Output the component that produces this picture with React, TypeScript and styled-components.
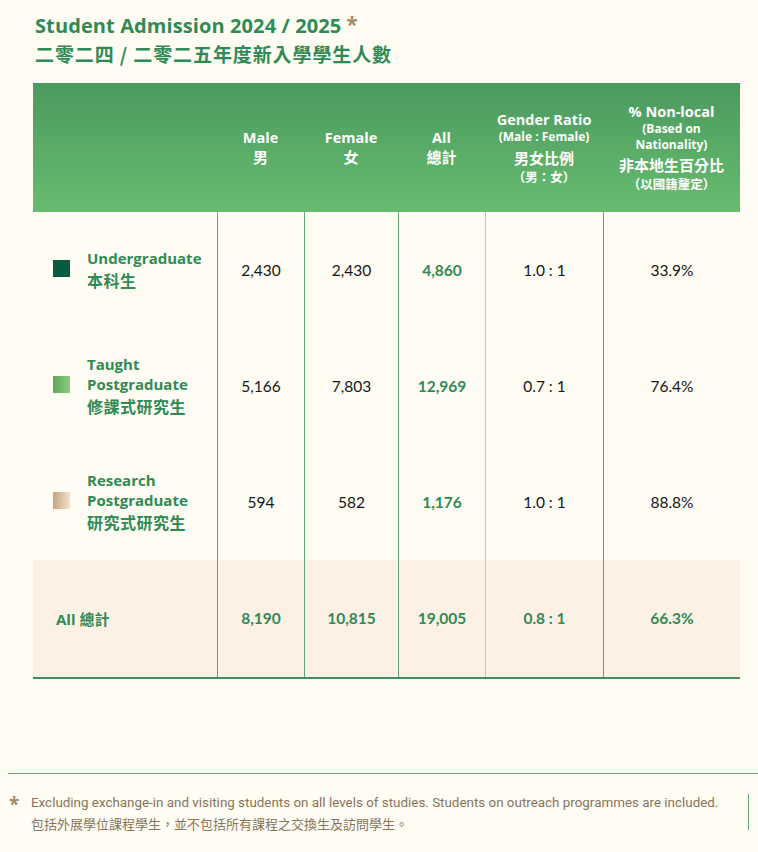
import React from "react";
import styled, { createGlobalStyle } from "styled-components";

const Global = createGlobalStyle`
  html, body { margin: 0; padding: 0; background: #fffcf3; }
  body { font-family: "Open Sans", "Noto Sans CJK TC", sans-serif; }
`;

const GREEN = "#2f8a55";
const LINE = "#5fa673";
const LINE_LIGHT = "#acd2b4";

const Page = styled.div`
  width: 758px;
  height: 852px;
  display: flex;
  flex-direction: column;
  box-sizing: border-box;
  padding-top: 10px;
`;

const TitleBlock = styled.div`
  padding-left: 35px;
  color: ${GREEN};
  font-weight: 700;
`;

const TitleEn = styled.div`
  font-family: "Open Sans", "Noto Sans CJK TC", sans-serif;
  font-size: 20px;
  line-height: 28px;
  letter-spacing: 0.1px;
`;

const Star = styled.span`
  color: #a58c68;
  font-size: 21px;
  margin-left: 5px;
  vertical-align: 1px;
`;

const TitleZh = styled.div`
  font-family: "Noto Sans CJK TC", sans-serif;
  font-size: 19px;
  line-height: 28px;
  letter-spacing: 0.9px;
`;

const Table = styled.div`
  margin: 15px 0 0 33px;
  width: 707px;
  display: grid;
  grid-template-columns: 184px 87px 94px 87px 118px 137px;
  border-bottom: 2px solid #3f8f5d;
`;

const Head = styled.div`
  grid-column: 1 / -1;
  display: grid;
  grid-template-columns: subgrid;
  height: 129px;
  background: linear-gradient(180deg, #4a9a5e 0%, #68bc6f 100%);
`;

const HeadCell = styled.div`
  display: flex;
  flex-direction: column;
  align-items: center;
  justify-content: center;
  text-align: center;
  color: #ffffff;
  font-weight: 700;
  padding: 0 2px;
`;

const HBig = styled.div`
  font-family: "Open Sans", "Noto Sans CJK TC", sans-serif;
  font-size: 14.5px;
  line-height: 19px;
`;

const HZh = styled.div<{ $gap?: number }>`
  font-family: "Noto Sans CJK TC", sans-serif;
  font-size: 15px;
  line-height: 20px;
  margin-top: ${(p) => p.$gap ?? 0}px;
`;

const HSmall = styled.div`
  font-family: "Open Sans", "Noto Sans CJK TC", sans-serif;
  font-size: 12px;
  line-height: 16px;
`;

const HSmallZh = styled.div`
  font-family: "Noto Sans CJK TC", sans-serif;
  font-size: 12.5px;
  line-height: 18px;
`;

const Row = styled.div<{ $total?: boolean }>`
  grid-column: 1 / -1;
  display: grid;
  grid-template-columns: subgrid;
  height: ${(p) => (p.$total ? 117 : 116)}px;
  background: ${(p) => (p.$total ? "#fdf1e6" : "transparent")};
`;

const Cell = styled.div<{ $div?: "dark" | "light"; $green?: boolean; $total?: boolean }>`
  display: flex;
  align-items: center;
  justify-content: center;
  border-left: ${(p) =>
    p.$div ? `1px solid ${p.$div === "light" ? LINE_LIGHT : LINE}` : "none"};
  font-family: "Lato", sans-serif;
  font-size: 15.5px;
  font-weight: ${(p) => (p.$green || p.$total ? 700 : 400)};
  color: ${(p) => (p.$green || p.$total ? GREEN : "#161616")};
  padding-bottom: 1px;
`;

const LabelCell = styled.div`
  display: flex;
  align-items: center;
  padding-left: 20px;
  gap: 17px;
`;

const Swatch = styled.div<{ $bg: string }>`
  width: 17px;
  height: 17px;
  flex: none;
  background: ${(p) => p.$bg};
  margin-top: -3px;
`;

const Label = styled.div`
  color: ${GREEN};
  font-weight: 700;
  font-family: "Open Sans", "Noto Sans CJK TC", sans-serif;
  font-size: 15px;
  line-height: 20px;
`;

const LabelZh = styled.div`
  font-family: "Noto Sans CJK TC", sans-serif;
  font-size: 16px;
  line-height: 24px;
  letter-spacing: 0.5px;
`;

const TotalLabel = styled.div`
  display: flex;
  align-items: center;
  padding-left: 23px;
  color: ${GREEN};
  font-weight: 700;
  font-family: "Open Sans", "Noto Sans CJK TC", sans-serif;
  font-size: 15px;
`;

const Spacer = styled.div`
  flex: 1;
`;

const Footer = styled.div`
  border-top: 1px solid #5fb27a;
  margin-left: 8px;
  padding: 18px 0 0 0;
  height: 79px;
  box-sizing: border-box;
  display: flex;
  align-items: flex-start;
`;

const FootStar = styled.div`
  color: #a58c68;
  font-size: 19px;
  font-weight: 700;
  width: 22px;
  padding-left: 1px;
  line-height: 24px;
  font-family: "Open Sans", sans-serif;
`;

const FootText = styled.div`
  flex: 1;
  color: #86755c;
  font-family: "Roboto", "Noto Sans CJK TC", sans-serif;
  font-size: 13.4px;
  line-height: 21px;
`;

const FootZh = styled.div`
  font-family: "Noto Sans CJK TC", sans-serif;
  font-size: 13px;
`;

const FootRule = styled.div`
  width: 1px;
  height: 36px;
  background: #5faa72;
  margin: 2px 9px 0 0;
`;

type RowData = {
  en: string[];
  zh: string;
  swatch: string;
  vals: string[];
};

const rows: RowData[] = [
  {
    en: ["Undergraduate"],
    zh: "本科生",
    swatch: "#075c40",
    vals: ["2,430", "2,430", "4,860", "1.0 : 1", "33.9%"],
  },
  {
    en: ["Taught", "Postgraduate"],
    zh: "修課式研究生",
    swatch: "linear-gradient(90deg, #5aa95b 0%, #8fca80 100%)",
    vals: ["5,166", "7,803", "12,969", "0.7 : 1", "76.4%"],
  },
  {
    en: ["Research", "Postgraduate"],
    zh: "研究式研究生",
    swatch: "linear-gradient(90deg, #c8a47c 0%, #f0e2cc 100%)",
    vals: ["594", "582", "1,176", "1.0 : 1", "88.8%"],
  },
];

const divs: ("dark" | "light")[] = ["dark", "dark", "dark", "light", "dark"];

export default function App() {
  return (
    <>
      <Global />
      <Page>
        <TitleBlock>
          <TitleEn>
            Student Admission 2024 / 2025<Star>*</Star>
          </TitleEn>
          <TitleZh>二零二四 / 二零二五年度新入學學生人數</TitleZh>
        </TitleBlock>

        <Table>
          <Head>
            <HeadCell />
            <HeadCell>
              <HBig>Male</HBig>
              <HZh>男</HZh>
            </HeadCell>
            <HeadCell>
              <HBig>Female</HBig>
              <HZh>女</HZh>
            </HeadCell>
            <HeadCell>
              <HBig>All</HBig>
              <HZh>總計</HZh>
            </HeadCell>
            <HeadCell>
              <HBig>Gender Ratio</HBig>
              <HSmall>(Male : Female)</HSmall>
              <HZh $gap={3}>男女比例</HZh>
              <HSmallZh>（男：女）</HSmallZh>
            </HeadCell>
            <HeadCell>
              <HBig>% Non-local</HBig>
              <HSmall>
                (Based on
                <br />
                Nationality)
              </HSmall>
              <HZh $gap={2}>非本地生百分比</HZh>
              <HSmallZh>（以國籍釐定）</HSmallZh>
            </HeadCell>
          </Head>

          {rows.map((r) => (
            <Row key={r.zh}>
              <LabelCell>
                <Swatch $bg={r.swatch} />
                <Label>
                  {r.en.map((l) => (
                    <div key={l}>{l}</div>
                  ))}
                  <LabelZh>{r.zh}</LabelZh>
                </Label>
              </LabelCell>
              {r.vals.map((v, i) => (
                <Cell key={i} $div={divs[i]} $green={i === 2}>
                  {v}
                </Cell>
              ))}
            </Row>
          ))}

          <Row $total>
            <TotalLabel>All 總計</TotalLabel>
            {["8,190", "10,815", "19,005", "0.8 : 1", "66.3%"].map((v, i) => (
              <Cell key={i} $div={divs[i]} $total>
                {v}
              </Cell>
            ))}
          </Row>
        </Table>

        <Spacer />

        <Footer>
          <FootStar>*</FootStar>
          <FootText>
            <div>
              Excluding exchange-in and visiting students on all levels of studies. Students on
              outreach programmes are included.
            </div>
            <FootZh>包括外展學位課程學生，並不包括所有課程之交換生及訪問學生。</FootZh>
          </FootText>
          <FootRule />
        </Footer>
      </Page>
    </>
  );
}
